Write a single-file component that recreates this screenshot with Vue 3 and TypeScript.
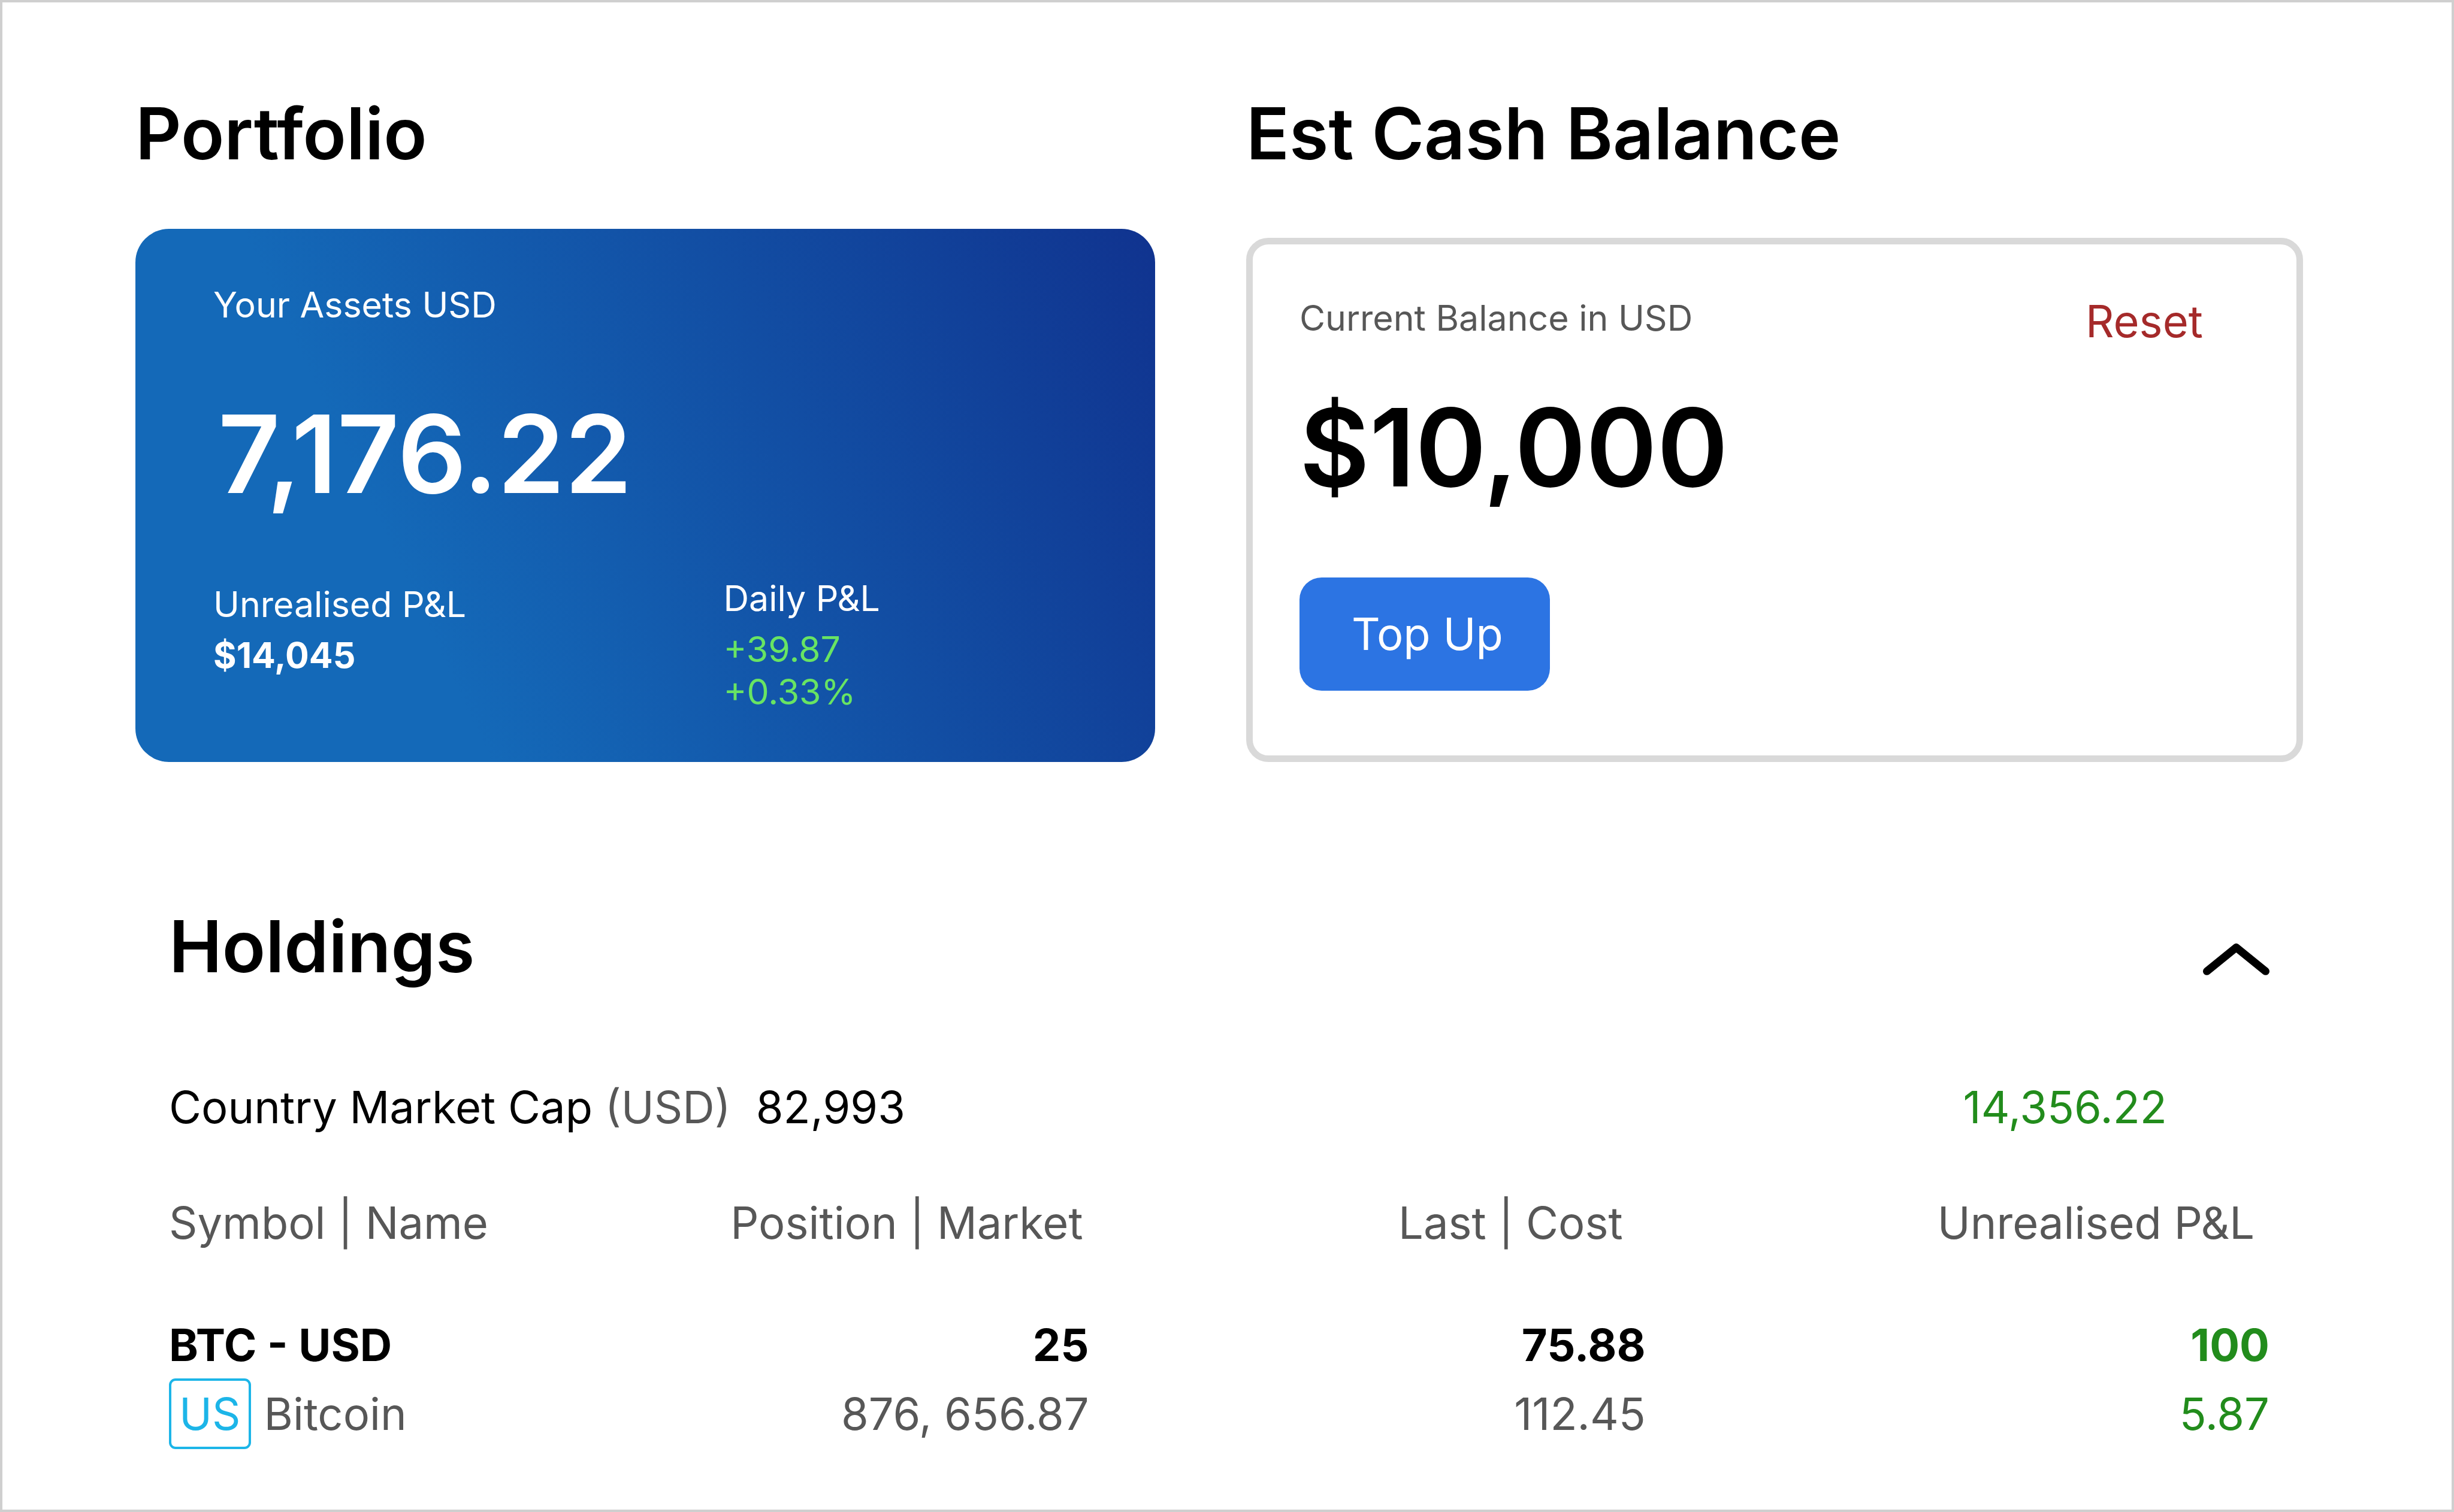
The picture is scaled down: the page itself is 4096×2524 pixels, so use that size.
<script setup lang="ts">
import { ref } from 'vue'

interface Holding {
  symbol: string
  country: string
  name: string
  position: string
  market: string
  last: string
  cost: string
  pnl: string
  pnlPercent: string
}

const expanded = ref(true)

const holdings: Holding[] = [
  {
    symbol: 'BTC - USD',
    country: 'US',
    name: 'Bitcoin',
    position: '25',
    market: '876, 656.87',
    last: '75.88',
    cost: '112.45',
    pnl: '100',
    pnlPercent: '5.87',
  },
]
</script>

<template>
  <main class="page">
    <div class="overview">
      <section class="panel">
        <h2 class="title">Portfolio</h2>
        <div class="assets">
          <p class="small">Your Assets USD</p>
          <p class="amount">7,176.22</p>
          <div class="stats">
            <div class="stat stat-total">
              <p class="small">Unrealised P&amp;L</p>
              <p class="small strong">$14,045</p>
            </div>
            <div class="stat">
              <p class="small">Daily P&amp;L</p>
              <div class="gain">
                <p class="small">+39.87</p>
                <p class="small">+0.33%</p>
              </div>
            </div>
          </div>
        </div>
      </section>

      <section class="panel">
        <h2 class="title">Est Cash Balance</h2>
        <div class="cash">
          <div class="cash-head">
            <p class="cash-label">Current Balance in USD</p>
            <button type="button" class="reset">Reset</button>
          </div>
          <p class="amount">$10,000</p>
          <button type="button" class="top-up">Top Up</button>
        </div>
      </section>
    </div>

    <section class="holdings">
      <div class="holdings-head">
        <h2 class="title">Holdings</h2>
        <button
          type="button"
          class="toggle"
          aria-label="Toggle holdings"
          :aria-expanded="expanded"
          @click="expanded = !expanded"
        >
          <svg class="chevron" viewBox="0 0 120 57" aria-hidden="true">
            <path d="M7 50 L60 7 L113 50" />
          </svg>
        </button>
      </div>

      <template v-if="expanded">
        <div class="market-cap">
          <p>Country Market Cap <span class="muted">(USD)</span><span class="cap-value">82,993</span></p>
          <p class="cap-pnl">14,356.22</p>
        </div>

        <table class="table">
          <colgroup>
            <col class="col-symbol" />
            <col class="col-position" />
            <col class="col-last" />
            <col class="col-pnl" />
          </colgroup>
          <thead>
            <tr>
              <th scope="col">Symbol | Name</th>
              <th scope="col" class="th-position">Position | Market</th>
              <th scope="col" class="th-last">Last | Cost</th>
              <th scope="col" class="th-pnl">Unrealised P&amp;L</th>
            </tr>
          </thead>
          <tbody>
            <tr v-for="item in holdings" :key="item.symbol">
              <td>
                <div class="primary">{{ item.symbol }}</div>
                <div class="muted"><span class="badge">{{ item.country }}</span>{{ item.name }}</div>
              </td>
              <td>
                <div class="primary">{{ item.position }}</div>
                <div class="muted">{{ item.market }}</div>
              </td>
              <td>
                <div class="primary">{{ item.last }}</div>
                <div class="muted">{{ item.cost }}</div>
              </td>
              <td class="profit">
                <div class="primary">{{ item.pnl }}</div>
                <div>{{ item.pnlPercent }}</div>
              </td>
            </tr>
          </tbody>
        </table>
      </template>
    </section>
  </main>
</template>

<style>
body {
  margin: 0;
}
</style>

<style scoped>
.page {
  box-sizing: border-box;
  min-height: 100vh;
  padding: 147px 248px 100px 222px;
  border: 4px solid #cfcfcf;
  background: #fff;
  color: #000;
  font-family: Inter, "Liberation Sans", sans-serif;
  font-size: 74px;
  line-height: 90px;
}

p,
h2 {
  margin: 0;
}

button {
  margin: 0;
  padding: 0;
  border: 0;
  background: none;
  color: inherit;
  font: inherit;
  cursor: pointer;
}

.title {
  font-size: 119px;
  font-weight: 600;
  line-height: 144px;
}

.small {
  font-size: 59px;
  line-height: 71px;
}

.strong {
  font-weight: 700;
}

.amount {
  font-size: 180px;
  font-weight: 600;
  line-height: 215px;
}

.muted {
  color: #575757;
}

.overview {
  display: grid;
  grid-template-columns: 1702fr 1764fr;
  gap: 152px;
}

.panel {
  display: flex;
  flex-direction: column;
}

.assets {
  margin-top: 87px;
  padding: 91px 0 82px 130px;
  border-radius: 56px;
  background: linear-gradient(65deg, #1469b8 28%, #10338f 100%);
  color: #fff;
}

.assets .amount {
  margin: 106px 0 98px 8px;
}

.stats {
  display: grid;
  grid-template-columns: 13fr 11fr;
}

.stat {
  display: flex;
  flex-direction: column;
  gap: 14px;
}

.stat-total {
  padding-top: 10px;
}

.gain {
  color: #68e463;
}

.cash {
  box-sizing: border-box;
  flex: 1;
  margin-top: 102px;
  padding: 83px 156px 0 78px;
  border: 11px solid #d9d9d9;
  border-radius: 37px;
}

.cash-head {
  display: flex;
  justify-content: space-between;
  align-items: flex-start;
}

.cash-label {
  color: #575757;
  font-size: 59px;
  line-height: 80px;
}

.reset {
  color: #a52a2a;
}

.cash .amount {
  margin: 58px 0 110px;
}

.top-up {
  display: block;
  padding: 49px 78px 50px 87px;
  border-radius: 37px;
  background: #2c74e3;
  color: #fff;
}

.holdings {
  margin: 236px 56px 0;
}

.holdings-head {
  display: flex;
  justify-content: space-between;
  align-items: flex-end;
}

.toggle {
  padding-bottom: 24px;
}

.chevron {
  display: block;
  width: 111px;
  height: 53px;
  fill: none;
  stroke: #000;
  stroke-width: 14;
  stroke-linecap: round;
  stroke-linejoin: round;
}

.market-cap {
  display: flex;
  justify-content: space-between;
  margin: 151px 0 103px;
}

.cap-value {
  margin-left: 42px;
}

.cap-pnl {
  margin-right: 171px;
  color: #228c1c;
}

.table {
  width: 100%;
  border-collapse: collapse;
  table-layout: fixed;
}

.col-symbol {
  width: 24.5%;
}

.col-position {
  width: 19.3%;
}

.col-last {
  width: 26.5%;
}

.col-pnl {
  width: 29.7%;
}

th,
td {
  padding: 0;
  text-align: right;
  white-space: nowrap;
}

th:first-child,
td:first-child {
  text-align: left;
}

th {
  padding-bottom: 114px;
  color: #575757;
  font-weight: 400;
}

.th-position {
  padding-right: 10px;
}

.th-last {
  padding-right: 38px;
}

.th-pnl {
  padding-right: 25px;
}

.primary {
  margin-bottom: 25px;
  font-weight: 700;
}

.profit {
  color: #228c1c;
}

.badge {
  margin-right: 22px;
  padding: 10px 13px;
  border: 4px solid #1cb5e8;
  border-radius: 11px;
  color: #1cb5e8;
}
</style>
